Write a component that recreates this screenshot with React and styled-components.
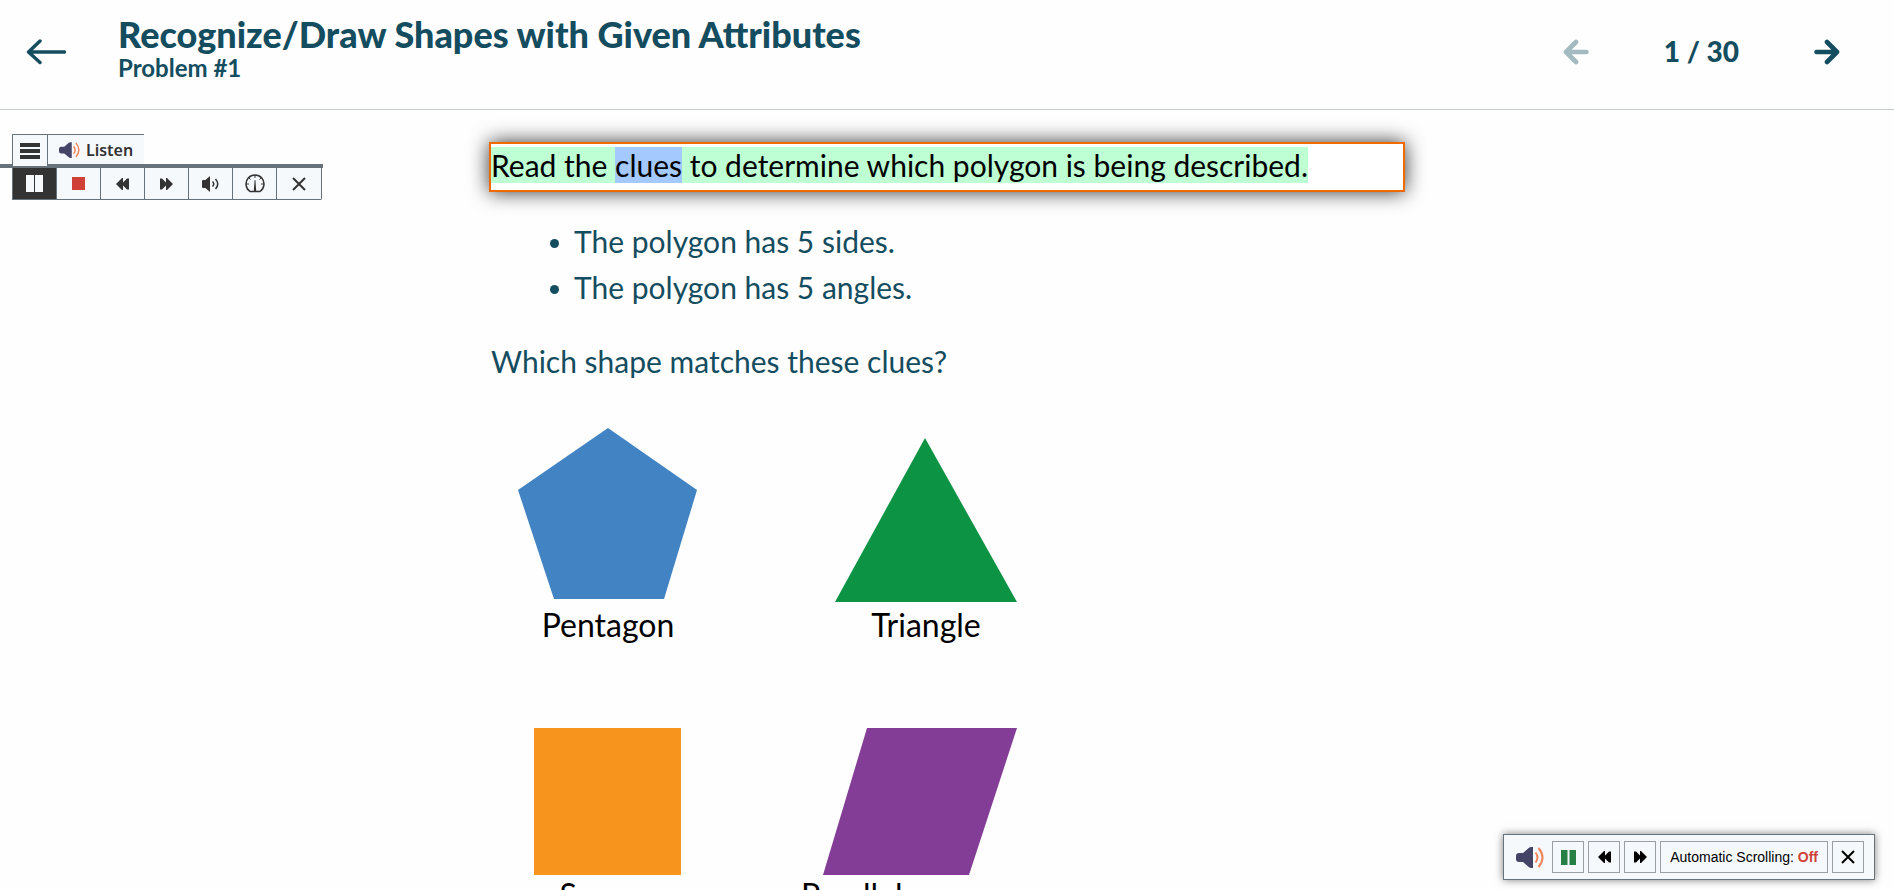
import React, { useState } from 'react';
import styled, { createGlobalStyle } from 'styled-components';

const GlobalStyle = createGlobalStyle`
  * {
    box-sizing: border-box;
  }
  body {
    margin: 0;
    background: #fefefe;
    color: #144d5f;
    font-family: Lato, "Open Sans", sans-serif;
  }
`;

const Page = styled.div`
  display: flex;
  flex-direction: column;
  height: 100vh;
  overflow: hidden;
`;

const Header = styled.header`
  display: flex;
  align-items: center;
  flex: none;
  height: 110px;
  padding: 0 54px 6px 26px;
  border-bottom: 1px solid #c6cbcc;
`;

const IconButton = styled.button`
  display: flex;
  padding: 0;
  border: 0;
  background: none;
  color: inherit;
  cursor: pointer;
  &:disabled {
    color: #a3bac1;
    cursor: default;
  }
`;

const Heading = styled.div`
  flex: 1;
  margin: 0 0 8px 52px;
`;

const Title = styled.h1`
  margin: 0;
  font-size: 36px;
  font-weight: 900;
  line-height: 40px;
`;

const Subtitle = styled.p`
  margin: 0;
  font-size: 24px;
  font-weight: 700;
  line-height: 28px;
`;

const Pager = styled.nav`
  display: flex;
  align-items: center;
  gap: 75px;
`;

const PageCount = styled.span`
  padding-bottom: 2px;
  font-size: 28px;
  font-weight: 900;
  line-height: 36px;
`;

const Main = styled.main`
  display: grid;
  grid-template-columns: minmax(330px, 1fr) minmax(0, 916px) minmax(0, 1fr);
`;

const Reader = styled.div`
  display: flex;
  flex-direction: column;
  align-items: flex-start;
  padding-top: 24px;
  color: #333;
`;

const ReaderTabs = styled.div`
  display: flex;
  align-items: flex-start;
  width: 323px;
  height: 34px;
  padding-left: 12px;
  background: linear-gradient(#67727a, #67727a) left bottom / 100% 4px no-repeat;
`;

const ReaderTab = styled.button`
  display: flex;
  align-items: center;
  justify-content: center;
  gap: 6px;
  width: ${({ $width }) => $width}px;
  height: ${({ $height }) => $height}px;
  padding: 0;
  border: solid #67727a;
  border-width: 1px 0 0 1px;
  background: #f5f9fc;
  color: #333;
  font: 600 16px "Noto Sans", sans-serif;
`;

const ReaderControls = styled.div`
  display: flex;
  margin-left: 12px;
  border: solid #67727a;
  border-width: 0 1px 1px;
  border-radius: 0 0 2px 0;
`;

const Control = styled.button`
  display: flex;
  align-items: center;
  justify-content: center;
  width: 44px;
  height: 31px;
  padding: 0;
  border: 0;
  border-right: 1px solid #67727a;
  background: ${({ $active }) => ($active ? '#333' : '#f5f9fc')};
  color: #333;
  &:last-child {
    border-right: 0;
  }
`;

const Content = styled.section`
  padding-top: 32px;
  font-size: 30px;
  line-height: 46px;
`;

const Reading = styled.p`
  margin: 0;
  padding-bottom: 4px;
  border: 2px solid #ef6a00;
  background: #fff;
  color: #000;
  line-height: 42px;
  box-shadow: 0 0 20px rgba(0, 0, 0, 0.8);
`;

const Sentence = styled.mark`
  background: #beffd3;
  color: inherit;
`;

const Word = styled.mark`
  background: #a3c9ff;
  color: inherit;
`;

const Clues = styled.ul`
  margin: 26px 0 28px;
  padding-left: 61px;
  list-style: none;
`;

const Clue = styled.li`
  display: flex;
  align-items: center;
  &::before {
    content: '';
    width: 9px;
    height: 9px;
    margin: 4px 15px 0 0;
    border-radius: 50%;
    background: currentColor;
  }
`;

const Question = styled.p`
  margin: 0;
  padding-left: 2px;
`;

const Shapes = styled.div`
  display: grid;
  grid-template-columns: repeat(2, 232px);
  gap: 45px 86px;
  padding: 34px 0 0 3px;
`;

const Shape = styled.figure`
  margin: 0;
  svg {
    display: block;
  }
`;

// $shift slides the caption left, under the base of a slanted shape
const Caption = styled.figcaption`
  margin: 0 ${({ $shift = 0 }) => `${$shift}px 0 ${-$shift}px`};
  color: #000;
  font-size: 32px;
  line-height: 36px;
  text-align: center;
`;

const Player = styled.aside`
  position: fixed;
  right: 19px;
  bottom: 10px;
  display: flex;
  align-items: center;
  gap: 4px;
  height: 46px;
  padding: 0 10px 0 12px;
  border: 1px solid #67727a;
  background: #f5f9fc;
  box-shadow: 0 0 8px rgba(0, 0, 0, 0.5);
`;

const PlayerButton = styled.button`
  display: flex;
  align-items: center;
  justify-content: center;
  min-width: 32px;
  height: 32px;
  padding: 0 ${({ $wide }) => ($wide ? 9 : 0)}px;
  border: 1px solid #99a0a6;
  background: #f5f9fc;
  color: #000;
  font: 14px "Liberation Sans", Arial, sans-serif;
  white-space: pre;
`;

const Off = styled.strong`
  color: #cf4037;
`;

const PlayerLogo = styled.span`
  display: flex;
  margin-right: 4px;
`;

const BackArrow = () => (
  <svg width="40" height="28" viewBox="0 0 40 28" fill="none" stroke="currentColor" strokeWidth="3.4" strokeLinecap="round" strokeLinejoin="round">
    <path d="M38.5 14H3M14 3 2.5 14 14 24.5" />
  </svg>
);

const Arrow = ({ flip }) => (
  <svg width="26" height="26" viewBox="0 0 26 26" fill="none" stroke="currentColor" strokeWidth="4.6" strokeLinecap="round" strokeLinejoin="round">
    <path d={flip ? 'M23.5 13H4M13 3 3 13l10 10' : 'M2.5 13H22M13 3l10 10-10 10'} />
  </svg>
);

const Horn = ({ width, height }) => (
  <svg width={width} height={height} viewBox="0 0 28 21" fill="none">
    <path d="M3 6h4L13 .8Q14 0 15 0h2v21h-2q-1 0-2-.8L7 15H3Q0 15 0 12V9Q0 6 3 6z" fill="#444466" />
    <path d="M19.5 5.5q4 5 0 10M22.5 1q8 9.500 0 19" stroke="#f5845a" strokeWidth="2" />
  </svg>
);

const MenuIcon = () => (
  <svg width="20" height="16" viewBox="0 0 20 16" fill="currentColor">
    <path d="M0 0h20v4H0zM0 6h20v4H0zM0 12h20v4H0z" />
  </svg>
);

const PauseLight = () => (
  <svg width="17" height="17" viewBox="0 0 17 17" fill="#f5f9fc">
    <path d="M0 0h8v17H0zM9 0h8v17H9z" />
  </svg>
);

const PauseGreen = () => (
  <svg width="15" height="15" viewBox="0 0 15 15" fill="#268045">
    <path d="M0 0h6.500v15H0zM8.500 0H15v15H8.500z" />
  </svg>
);

const StopIcon = () => (
  <svg width="13" height="13" viewBox="0 0 13 13">
    <rect width="13" height="13" fill="#cf4037" />
  </svg>
);

const Rewind = () => (
  <svg width="13" height="12" viewBox="0 0 13 12" fill="currentColor">
    <path d="M7 0v4.500L11 .5h2v11h-2L7 7.500V12H6L0 6l6-6z" />
  </svg>
);

const Forward = () => (
  <svg width="13" height="12" viewBox="0 0 13 12" fill="currentColor">
    <path d="M6 0v4.500L2 .5H0v11h2L6 7.500V12h1l6-6-6-6z" />
  </svg>
);

const VolumeIcon = () => (
  <svg width="18" height="16" viewBox="0 0 18 16" fill="none" stroke="currentColor">
    <path d="M1 4h2.500L8 0v16l-4.500-4H1q-1 0-1-1V5q0-1 1-1z" fill="currentColor" stroke="none" />
    <path d="M10.500 5.500q2.500 2.500 0 5M13.500 3q4.500 5 0 10" strokeWidth="1.500" />
  </svg>
);

const GaugeIcon = () => (
  <svg width="20" height="19" viewBox="0 0 20 19" fill="none" stroke="currentColor" strokeWidth="1.500">
    <path d="M5 17.500A9 9 0 1 1 15 17.500z" strokeLinejoin="round" />
    <path d="M10 1v3M4 4l1.500 1.500M16 4l-1.500 1.500M1 10h3M16 10h3" strokeWidth="1" />
    <path d="M9.600 6h.8l.8 11H8.800z" fill="currentColor" stroke="none" />
  </svg>
);

const CloseIcon = () => (
  <svg width="14" height="14" viewBox="0 0 14 14" fill="none" stroke="currentColor" strokeWidth="2">
    <path d="m1 1 12 12M13 1 1 13" />
  </svg>
);

const controls = [
  { label: 'Pause', icon: PauseLight, active: true },
  { label: 'Stop', icon: StopIcon },
  { label: 'Rewind', icon: Rewind },
  { label: 'Forward', icon: Forward },
  { label: 'Volume', icon: VolumeIcon },
  { label: 'Speed', icon: GaugeIcon },
  { label: 'Close player', icon: CloseIcon },
];

const shapes = [
  { name: 'Pentagon', color: '#4283c4', points: '116,10 205,72 172,181 62,181 26,72' },
  { name: 'Triangle', color: '#0c9444', points: '115,20 207,184 25,184' },
  { name: 'Square', color: '#f7941e', points: '42,40 189,40 189,187 42,187' },
  { name: 'Parallelogram', color: '#843d96', points: '57,40 207,40 159,187 13,187', shift: 30 },
];

const App = () => {
  const [page, setPage] = useState(1);

  return (
    <Page>
      <GlobalStyle />
      <Header>
        <IconButton aria-label="Back"><BackArrow /></IconButton>
        <Heading>
          <Title>Recognize/Draw Shapes with Given Attributes</Title>
          <Subtitle>Problem #{page}</Subtitle>
        </Heading>
        <Pager>
          <IconButton aria-label="Previous" disabled={page === 1} onClick={() => setPage(page - 1)}>
            <Arrow flip />
          </IconButton>
          <PageCount>{page} / 30</PageCount>
          <IconButton aria-label="Next" disabled={page === 30} onClick={() => setPage(page + 1)}>
            <Arrow />
          </IconButton>
        </Pager>
      </Header>
      <Main>
        <Reader>
          <ReaderTabs>
            <ReaderTab $width={35} $height={32} aria-label="Menu"><MenuIcon /></ReaderTab>
            <ReaderTab $width={97} $height={30}>
              <Horn width={21} height={16} />
              Listen
            </ReaderTab>
          </ReaderTabs>
          <ReaderControls>
            {controls.map(({ label, icon: Icon, active }) => (
              <Control key={label} aria-label={label} $active={active}>
                <Icon />
              </Control>
            ))}
          </ReaderControls>
        </Reader>
        <Content>
          <Reading>
            <Sentence>
              Read the <Word>clues</Word> to determine which polygon is being described.
            </Sentence>
          </Reading>
          <Clues>
            <Clue>The polygon has 5 sides.</Clue>
            <Clue>The polygon has 5 angles.</Clue>
          </Clues>
          <Question>Which shape matches these clues?</Question>
          <Shapes>
            {shapes.map(({ name, color, points, shift }) => (
              <Shape key={name}>
                <svg width="232" height="189" viewBox="0 0 232 189" aria-hidden="true">
                  <polygon points={points} fill={color} />
                </svg>
                <Caption $shift={shift}>{name}</Caption>
              </Shape>
            ))}
          </Shapes>
        </Content>
      </Main>
      <Player>
        <PlayerLogo><Horn width={28} height={21} /></PlayerLogo>
        <PlayerButton aria-label="Pause"><PauseGreen /></PlayerButton>
        <PlayerButton aria-label="Rewind"><Rewind /></PlayerButton>
        <PlayerButton aria-label="Forward"><Forward /></PlayerButton>
        <PlayerButton $wide>Automatic Scrolling: <Off>Off</Off></PlayerButton>
        <PlayerButton aria-label="Close"><CloseIcon /></PlayerButton>
      </Player>
    </Page>
  );
};

export default App;
